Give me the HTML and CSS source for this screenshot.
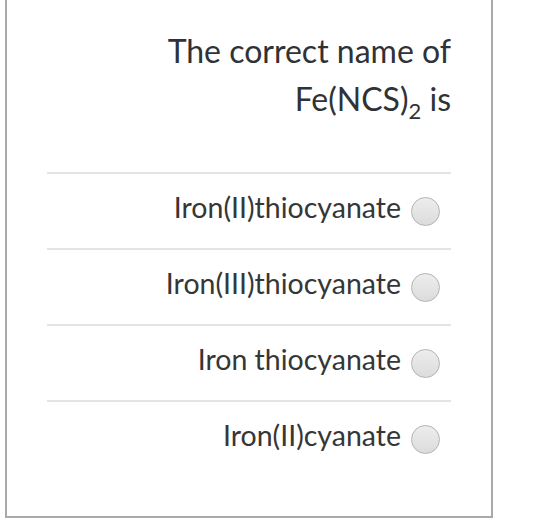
FILE: index.html
```html
<!DOCTYPE html>
<html>
<head>
<meta charset="utf-8">
<link rel="stylesheet" href="styles.css">
</head>
<body>
<div class="card">
  <div class="question">The correct name of<br>Fe(NCS)<sub class="sub">2</sub> is</div>
  <ul class="options">
    <li class="option"><span class="label">Iron(II)thiocyanate</span><span class="radio"></span></li>
    <li class="option"><span class="label">Iron(III)thiocyanate</span><span class="radio"></span></li>
    <li class="option"><span class="label">Iron thiocyanate</span><span class="radio"></span></li>
    <li class="option"><span class="label">Iron(II)cyanate</span><span class="radio"></span></li>
  </ul>
</div>
</body>
</html>
```
FILE: styles.css
```css
html, body {
  margin: 0;
  padding: 0;
  background: #ffffff;
}
body {
  font-family: Lato, "Open Sans", sans-serif;
  color: #2f3236;
}
.card {
  margin-left: 5px;
  width: 488px;
  height: 518px;
  box-sizing: border-box;
  border: 2px solid #a9a9a9;
  border-top: none;
  padding: 27px 40px 0 40px;
}
.question {
  text-align: right;
  font-size: 32px;
  line-height: 48px;
  margin-bottom: 49px;
}
.sub {
  font-size: 22px;
  vertical-align: baseline;
  position: relative;
  top: 8px;
  line-height: 0;
}
.options {
  list-style: none;
  margin: 0;
  padding: 0;
}
.option {
  border-top: 2px solid #e4e4e4;
  height: 74px;
  display: flex;
  align-items: center;
  justify-content: flex-end;
  padding-right: 11px;
}
.label {
  font-size: 28.5px;
  color: #363636;
  position: relative;
  top: -4px;
}
.radio {
  width: 27px;
  height: 27px;
  border-radius: 50%;
  border: 1px solid #b3b3b3;
  background: linear-gradient(#ededed, #dcdcdc);
  margin-left: 10px;
  flex: none;
}
```
